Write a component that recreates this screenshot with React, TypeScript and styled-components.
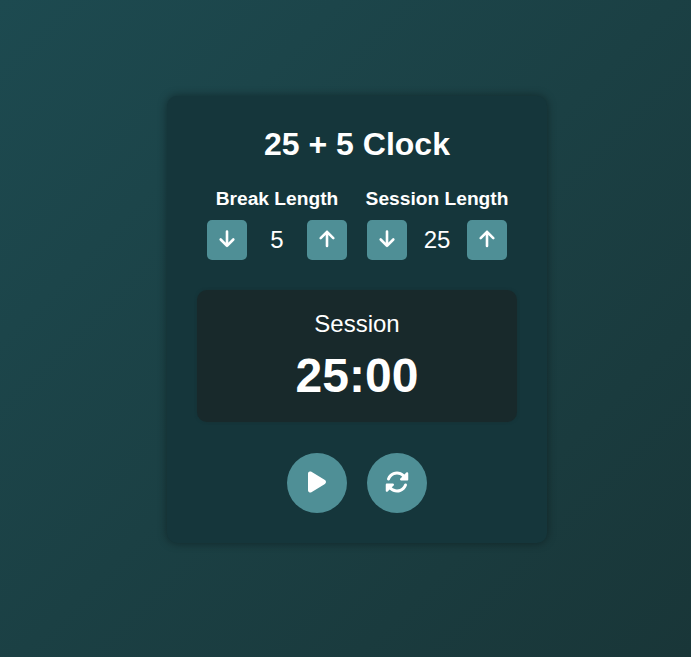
import React, { useEffect, useState } from 'react';
import styled, { createGlobalStyle } from 'styled-components';
import { FaPause, FaPlay, FaRotate } from 'react-icons/fa6';

const GlobalStyle = createGlobalStyle`
  * { box-sizing: border-box; }
  body {
    margin: 0;
    color: #fff;
    font-family: "Liberation Sans", Arial, sans-serif;
  }
`;

const Page = styled.main`
  min-height: 100vh;
  display: flex;
  align-items: flex-start;
  justify-content: center;
  padding: 96px 0 0 23px;
  background: linear-gradient(135deg, #1d4a50, #193638);
`;

const Card = styled.section`
  width: 380px;
  height: 447px;
  padding: 30px;
  border-radius: 10px;
  background: #15363b;
  box-shadow: 0 0 10px rgba(0, 0, 0, 0.4);
  text-align: center;
`;

const Title = styled.h1`
  margin: 0 0 25px;
  font-size: 32px;
  line-height: 37px;
`;

const Settings = styled.div`
  display: flex;
  justify-content: center;
  gap: 20px;
`;

const Setting = styled.div`
  display: flex;
  flex-direction: column;
  align-items: center;
  width: 140px;
`;

const Label = styled.h2`
  margin: 0 0 10px;
  font-size: 19.2px;
  line-height: 22px;
  white-space: nowrap;
`;

const Stepper = styled.div`
  display: flex;
  align-items: center;
  justify-content: space-between;
  width: 100%;
`;

const Length = styled.span`
  font-size: 24px;
  line-height: 28px;
`;

const Button = styled.button<{ $round?: boolean }>`
  display: flex;
  align-items: center;
  justify-content: center;
  width: ${({ $round }) => ($round ? 60 : 40)}px;
  height: ${({ $round }) => ($round ? 60 : 40)}px;
  padding: 0 0 2px;
  border: 0;
  border-radius: ${({ $round }) => ($round ? '50%' : '5px')};
  background: #4f8f96;
  color: #fff;
  font-size: 24px;
  cursor: pointer;
`;

const ArrowSvg = styled.svg`
  width: 20px;
  height: 20px;
  fill: none;
  stroke: currentColor;
  stroke-width: 2.6;
  stroke-linecap: round;
  stroke-linejoin: round;
`;

const Display = styled.div`
  height: 132px;
  margin: 30px 0 31px;
  padding: 20px;
  border-radius: 10px;
  background: #18292b;
  box-shadow: 0 0 3px rgba(24, 41, 43, 0.5);
`;

const Mode = styled.div`
  font-size: 24px;
  line-height: 27px;
`;

const Time = styled.div`
  margin-top: 11px;
  font-size: 48px;
  font-weight: 700;
  line-height: 55px;
`;

const Controls = styled.div`
  display: flex;
  justify-content: center;
  gap: 20px;
`;

function ArrowIcon({ up }: { up?: boolean }) {
  return (
    <ArrowSvg viewBox="0 0 20 20" aria-hidden="true">
      <path d={up ? 'M10 17V2.8M3.7 9.1L10 2.8L16.3 9.1' : 'M10 2.6V16.8M3.7 10.5L10 16.8L16.3 10.5'} />
    </ArrowSvg>
  );
}

interface LengthSettingProps {
  label: string;
  value: number;
  onChange: (value: number) => void;
}

function LengthSetting({ label, value, onChange }: LengthSettingProps) {
  return (
    <Setting>
      <Label>{label}</Label>
      <Stepper>
        <Button aria-label={`Decrease ${label}`} onClick={() => onChange(Math.max(1, value - 1))}>
          <ArrowIcon />
        </Button>
        <Length>{value}</Length>
        <Button aria-label={`Increase ${label}`} onClick={() => onChange(Math.min(60, value + 1))}>
          <ArrowIcon up />
        </Button>
      </Stepper>
    </Setting>
  );
}

const twoDigits = (value: number) => String(value).padStart(2, '0');

export default function App() {
  const [breakLength, setBreakLength] = useState(5);
  const [sessionLength, setSessionLength] = useState(25);
  const [seconds, setSeconds] = useState(25 * 60);
  const [mode, setMode] = useState<'Session' | 'Break'>('Session');
  const [running, setRunning] = useState(false);

  useEffect(() => {
    if (!running) return;
    const timer = setTimeout(() => {
      if (seconds > 0) {
        setSeconds(seconds - 1);
      } else {
        setMode(mode === 'Session' ? 'Break' : 'Session');
        setSeconds((mode === 'Session' ? breakLength : sessionLength) * 60);
      }
    }, 1000);
    return () => clearTimeout(timer);
  }, [running, seconds, mode, breakLength, sessionLength]);

  const changeBreak = (value: number) => {
    if (running) return;
    setBreakLength(value);
    if (mode === 'Break') setSeconds(value * 60);
  };

  const changeSession = (value: number) => {
    if (running) return;
    setSessionLength(value);
    if (mode === 'Session') setSeconds(value * 60);
  };

  const reset = () => {
    setRunning(false);
    setMode('Session');
    setBreakLength(5);
    setSessionLength(25);
    setSeconds(25 * 60);
  };

  return (
    <>
      <GlobalStyle />
      <Page>
        <Card>
          <Title>25 + 5 Clock</Title>
          <Settings>
            <LengthSetting label="Break Length" value={breakLength} onChange={changeBreak} />
            <LengthSetting label="Session Length" value={sessionLength} onChange={changeSession} />
          </Settings>
          <Display>
            <Mode>{mode}</Mode>
            <Time>{`${twoDigits(Math.floor(seconds / 60))}:${twoDigits(seconds % 60)}`}</Time>
          </Display>
          <Controls>
            <Button $round aria-label="Start or stop" onClick={() => setRunning(!running)}>
              {running ? <FaPause /> : <FaPlay />}
            </Button>
            <Button $round aria-label="Reset" onClick={reset}>
              <FaRotate />
            </Button>
          </Controls>
        </Card>
      </Page>
    </>
  );
}
